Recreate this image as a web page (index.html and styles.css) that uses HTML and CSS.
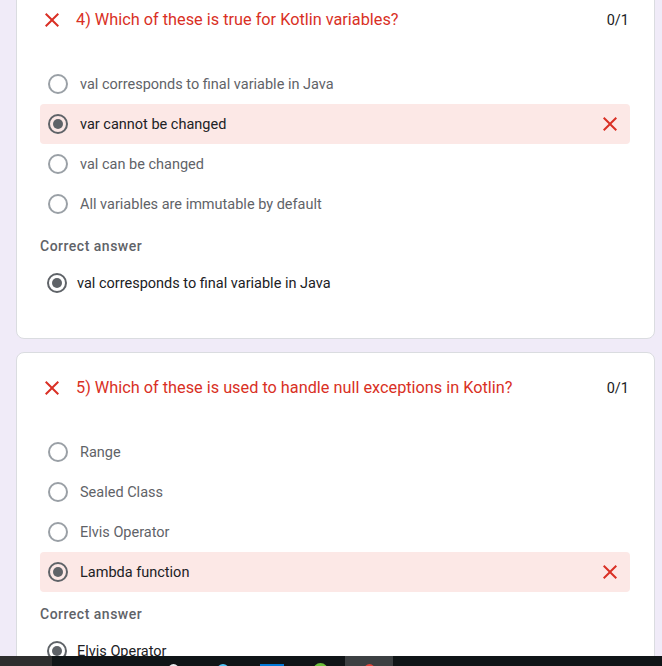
FILE: index.html
```html
<!DOCTYPE html>
<html lang="en">
<head>
<meta charset="utf-8">
<title>Quiz results</title>
<link rel="stylesheet" href="styles.css">
</head>
<body>
<main class="page">
  <section class="card">
    <div class="q-head">
      <svg class="x-icon" viewBox="0 0 24 24"><path d="M19 6.41L17.59 5 12 10.59 6.41 5 5 6.41 10.59 12 5 17.59 6.41 19 12 13.41 17.59 19 19 17.59 13.41 12z"/></svg>
      <div class="q-title">4) Which of these is true for Kotlin variables?</div>
      <div class="q-score">0/1</div>
    </div>
    <div class="options">
      <div class="opt"><span class="radio"></span><span class="opt-text">val corresponds to final variable in Java</span></div>
      <div class="opt opt-wrong"><span class="radio radio-on"></span><span class="opt-text">var cannot be changed</span>
        <svg class="x-icon x-end" viewBox="0 0 24 24"><path d="M19 6.41L17.59 5 12 10.59 6.41 5 5 6.41 10.59 12 5 17.59 6.41 19 12 13.41 17.59 19 19 17.59 13.41 12z"/></svg></div>
      <div class="opt"><span class="radio"></span><span class="opt-text">val can be changed</span></div>
      <div class="opt"><span class="radio"></span><span class="opt-text">All variables are immutable by default</span></div>
    </div>
    <div class="ca-label">Correct answer</div>
    <div class="ca-opt"><span class="radio radio-on"></span><span class="opt-text">val corresponds to final variable in Java</span></div>
  </section>

  <section class="card">
    <div class="q-head">
      <svg class="x-icon" viewBox="0 0 24 24"><path d="M19 6.41L17.59 5 12 10.59 6.41 5 5 6.41 10.59 12 5 17.59 6.41 19 12 13.41 17.59 19 19 17.59 13.41 12z"/></svg>
      <div class="q-title">5) Which of these is used to handle null exceptions in Kotlin?</div>
      <div class="q-score">0/1</div>
    </div>
    <div class="options">
      <div class="opt"><span class="radio"></span><span class="opt-text">Range</span></div>
      <div class="opt"><span class="radio"></span><span class="opt-text">Sealed Class</span></div>
      <div class="opt"><span class="radio"></span><span class="opt-text">Elvis Operator</span></div>
      <div class="opt opt-wrong"><span class="radio radio-on"></span><span class="opt-text">Lambda function</span>
        <svg class="x-icon x-end" viewBox="0 0 24 24"><path d="M19 6.41L17.59 5 12 10.59 6.41 5 5 6.41 10.59 12 5 17.59 6.41 19 12 13.41 17.59 19 19 17.59 13.41 12z"/></svg></div>
    </div>
    <div class="ca-label">Correct answer</div>
    <div class="ca-opt"><span class="radio radio-on"></span><span class="opt-text">Elvis Operator</span></div>
  </section>
</main>

<div class="taskbar">
  <div class="tb-start"></div>
  <div class="tb-gap"></div>
  <div class="tb-slot"><span class="tb-icon tb-white"></span></div>
  <div class="tb-slot"><span class="tb-icon tb-lblue"></span></div>
  <div class="tb-slot"><span class="tb-icon tb-folder"></span></div>
  <div class="tb-slot"><span class="tb-icon tb-green"></span></div>
  <div class="tb-slot tb-active"><span class="tb-icon tb-red"></span></div>
</div>
</body>
</html>
```
FILE: styles.css
```css
* { box-sizing: border-box; }
html, body { margin: 0; padding: 0; }
body {
  background: #f0ebf8;
  font-family: Roboto, "Liberation Sans", Arial, sans-serif;
  color: #202124;
  overflow: hidden;
}
.page {
  margin-top: -16px;
  padding: 0 7px 40px 16px;
  display: flex;
  flex-direction: column;
  gap: 13px;
}
.card {
  background: #fff;
  border: 1px solid #dadce0;
  border-radius: 8px;
  padding: 23px 24px 35px 23px;
}
.q-head {
  display: flex;
  align-items: center;
  height: 24px;
}
.x-icon {
  width: 24px;
  height: 24px;
  fill: #d93025;
  flex: none;
}
.q-title {
  margin-left: 12px;
  flex: 1;
  font-size: 16.3px;
  line-height: 24px;
  color: #d93025;
}
.q-score {
  font-size: 14.5px;
  margin-right: 1px;
  color: #202124;
}
.options {
  margin-top: 32px;
  display: flex;
  flex-direction: column;
}
.opt {
  height: 40px;
  display: flex;
  align-items: center;
  padding: 0 8px;
  border-radius: 4px;
}
.opt .opt-text {
  margin-left: 12px;
  font-size: 14.5px;
  color: #5f6368;
  flex: 1;
}
.opt-wrong { background: #fce8e6; }
.opt-wrong .opt-text { color: #202124; }
.x-end { margin-left: auto; }
.radio {
  width: 20px;
  height: 20px;
  border-radius: 50%;
  border: 2px solid #9aa0a6;
  flex: none;
  display: flex;
  align-items: center;
  justify-content: center;
}
.radio-on { border-color: #5f6368; }
.radio-on::after {
  content: "";
  width: 10px;
  height: 10px;
  border-radius: 50%;
  background: #5f6368;
}
.ca-label {
  margin-top: 12px;
  font-size: 14px;
  font-weight: 500;
  line-height: 20px;
  color: #5f6368;
  letter-spacing: 0.5px;
}
.ca-opt {
  margin-top: 7px;
  height: 40px;
  display: flex;
  align-items: center;
  padding-left: 7px;
}
.ca-opt .opt-text {
  margin-left: 10px;
  font-size: 14.5px;
  color: #202124;
}
.taskbar {
  position: fixed;
  left: 0;
  right: 0;
  bottom: 0;
  height: 10px;
  background: #101517;
  display: flex;
  overflow: hidden;
}
.tb-start { width: 52px; background: #2e2e2e; }
.tb-gap { width: 97px; }
.tb-slot {
  width: 49px;
  display: flex;
  justify-content: center;
  padding-top: 8px;
}
.tb-icon {
  width: 12px;
  height: 12px;
  border-radius: 50%;
  display: block;
}
.tb-white { background: #e8eaed; width: 11px; }
.tb-lblue { background: #4fc3f7; }
.tb-folder { width: 24px; border-radius: 0; background: #0078d7; }
.tb-green { background: #6cbf3a; width: 15px; height: 15px; margin-top: -1px; }
.tb-active { background: #3c4042; width: 48px; }
.tb-red { background: #e0443a; width: 11px; }
```
